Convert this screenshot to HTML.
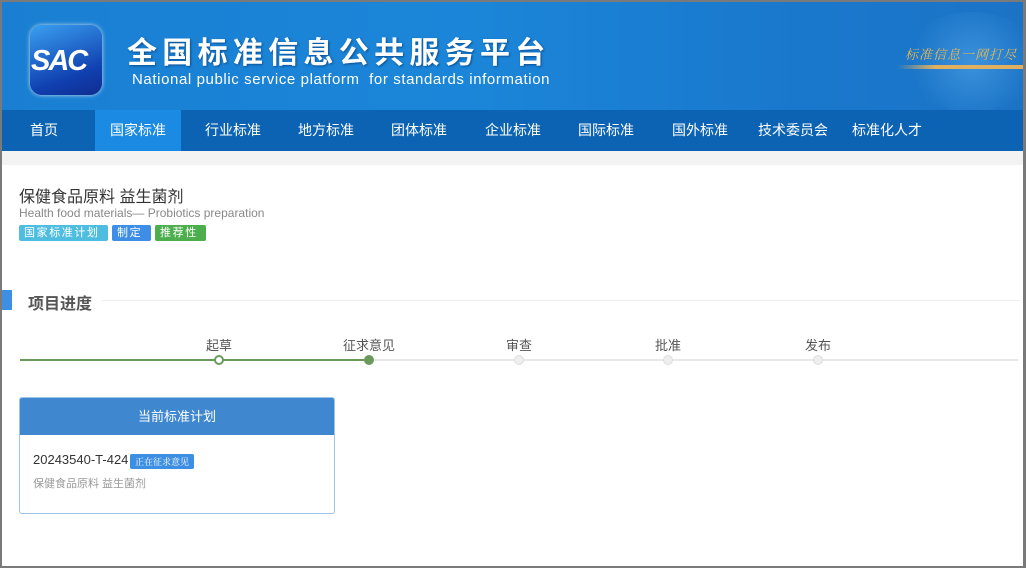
<!DOCTYPE html><html><head><meta charset="utf-8"><style>
*{margin:0;padding:0;box-sizing:border-box}
body{width:1028px;height:568px;background:#fff;font-family:"Liberation Sans","Noto Sans CJK SC",sans-serif;position:relative;overflow:hidden}
.frame{position:absolute;left:0;top:0;width:1026px;height:568px;border:2px solid #7a7a7a;border-right-width:3px}
.hdr{position:absolute;left:2px;top:2px;width:1022px;height:108px;background:linear-gradient(90deg,#1a7fd2 0%,#1b86d9 45%,#1a79cd 75%,#1b73c6 100%)}
.logo{position:absolute;left:28px;top:23px;width:72px;height:70px;border-radius:12px;background:linear-gradient(160deg,#3aa0f0,#1040b0 70%,#102c90);box-shadow:0 0 4px #cde}
.logo span{position:absolute;left:1px;top:20px;color:#fff;font:italic bold 29px "Liberation Sans",sans-serif;letter-spacing:-2px}
.t1{position:absolute;left:125px;top:26px;color:#fff;font-size:30px;letter-spacing:5.3px;font-weight:bold;text-shadow:1px 1px 2px #0a4d90;white-space:nowrap}
.t2{position:absolute;left:130px;top:69px;color:#fff;font-size:15px;letter-spacing:.6px;white-space:nowrap}
.slogan{position:absolute;left:903px;top:42px;color:#e8b850;font-size:13px;font-style:italic;font-family:"Noto Serif CJK SC",serif;white-space:nowrap;letter-spacing:1px}
.sline{position:absolute;left:895px;top:63px;width:129px;height:4px;border-radius:2px;background:linear-gradient(90deg,rgba(230,180,80,0),#e0b060 30%,#e0b060)}
.globe{position:absolute;left:900px;top:10px;width:140px;height:100px;border-radius:50%;background:radial-gradient(circle,rgba(120,200,255,.35),rgba(30,130,220,0) 70%)}
.nav{position:absolute;left:2px;top:110px;width:1022px;height:41px;background:#0c63b3}
.nav a{position:absolute;top:0;height:41px;line-height:41px;color:#fff;font-size:14px;text-align:center}
.nav a.on{background:#1a8ae2}
.strip{position:absolute;left:2px;top:151px;width:1022px;height:14px;background:#f3f3f3}
.h1{position:absolute;left:19px;top:183px;font-size:16px;color:#333}
.en{position:absolute;left:19px;top:206px;font-size:12px;color:#888}
.tag{position:absolute;top:225px;height:16px;line-height:16px;font-size:11px;color:#fff;padding:0 5px;letter-spacing:1.6px;border-radius:2px}
.bar{position:absolute;left:2px;top:290px;width:10px;height:20px;background:#3d8fe4}
.sec{position:absolute;left:28px;top:290px;font-size:16px;font-weight:bold;color:#555}
.secl{position:absolute;left:102px;top:300px;width:918px;height:1px;background:#eee}
.line{position:absolute;top:359px;height:2px}
.dot{position:absolute;top:355px;width:10px;height:10px;border-radius:50%;background:#eee;border:1px solid #ddd}
.lbl{position:absolute;top:335px;font-size:13px;color:#555;transform:translateX(-50%)}
.card{position:absolute;left:19px;top:397px;width:316px;height:117px;border:1px solid #9cc3e8;border-radius:3px;overflow:hidden}
.ch{height:37px;background:#3f87cf;color:#fff;text-align:center;line-height:37px;font-size:13px}
.code{position:absolute;left:13px;top:54px;font-size:13px;color:#333}
.st{position:absolute;left:110px;top:56px;height:15px;line-height:15px;padding:0 5px;background:#3d8fe4;color:#fff;font-size:9px;border-radius:2px;font-family:"Noto Serif CJK SC",serif}
.nm{position:absolute;left:13px;top:77px;font-size:11px;color:#999}
</style></head><body>
<div class="hdr"><div class="globe"></div><div class="logo"><span>SAC</span></div>
<div class="t1">全国标准信息公共服务平台</div>
<div class="t2">National public service platform &nbsp;for standards information</div>
<div class="slogan">标准信息一网打尽</div><div class="sline"></div></div>
<div class="nav">
<a style="left:12px;width:60px">首页</a>
<a class="on" style="left:93px;width:86px">国家标准</a>
<a style="left:188px;width:86px">行业标准</a>
<a style="left:281px;width:86px">地方标准</a>
<a style="left:374px;width:86px">团体标准</a>
<a style="left:468px;width:86px">企业标准</a>
<a style="left:561px;width:86px">国际标准</a>
<a style="left:655px;width:86px">国外标准</a>
<a style="left:746px;width:90px">技术委员会</a>
<a style="left:840px;width:90px">标准化人才</a>
</div>
<div class="strip"></div>
<div class="h1">保健食品原料 益生菌剂</div>
<div class="en">Health food materials— Probiotics preparation</div>
<div class="tag" style="left:19px;width:89px;background:#4fbde0">国家标准计划</div>
<div class="tag" style="left:112px;width:39px;background:#3e8ee6">制定</div>
<div class="tag" style="left:155px;width:51px;background:#4cae4c">推荐性</div>
<div class="bar"></div><div class="sec">项目进度</div><div class="secl"></div>
<div class="line" style="left:20px;width:350px;background:#6a9a5a"></div>
<div class="line" style="left:370px;width:648px;background:#e8e8e8"></div>
<div class="dot" style="left:214px;background:#fff;border:2px solid #6a9a5a"></div>
<div class="dot" style="left:364px;background:#6a9a5a;border-color:#6a9a5a"></div>
<div class="dot" style="left:514px"></div>
<div class="dot" style="left:663px"></div>
<div class="dot" style="left:813px"></div>
<div class="lbl" style="left:219px">起草</div>
<div class="lbl" style="left:369px">征求意见</div>
<div class="lbl" style="left:519px">审查</div>
<div class="lbl" style="left:668px">批准</div>
<div class="lbl" style="left:818px">发布</div>
<div class="card"><div class="ch">当前标准计划</div>
<div class="code">20243540-T-424</div><div class="st">正在征求意见</div>
<div class="nm">保健食品原料 益生菌剂</div></div>
<div class="frame"></div>
</body></html>
